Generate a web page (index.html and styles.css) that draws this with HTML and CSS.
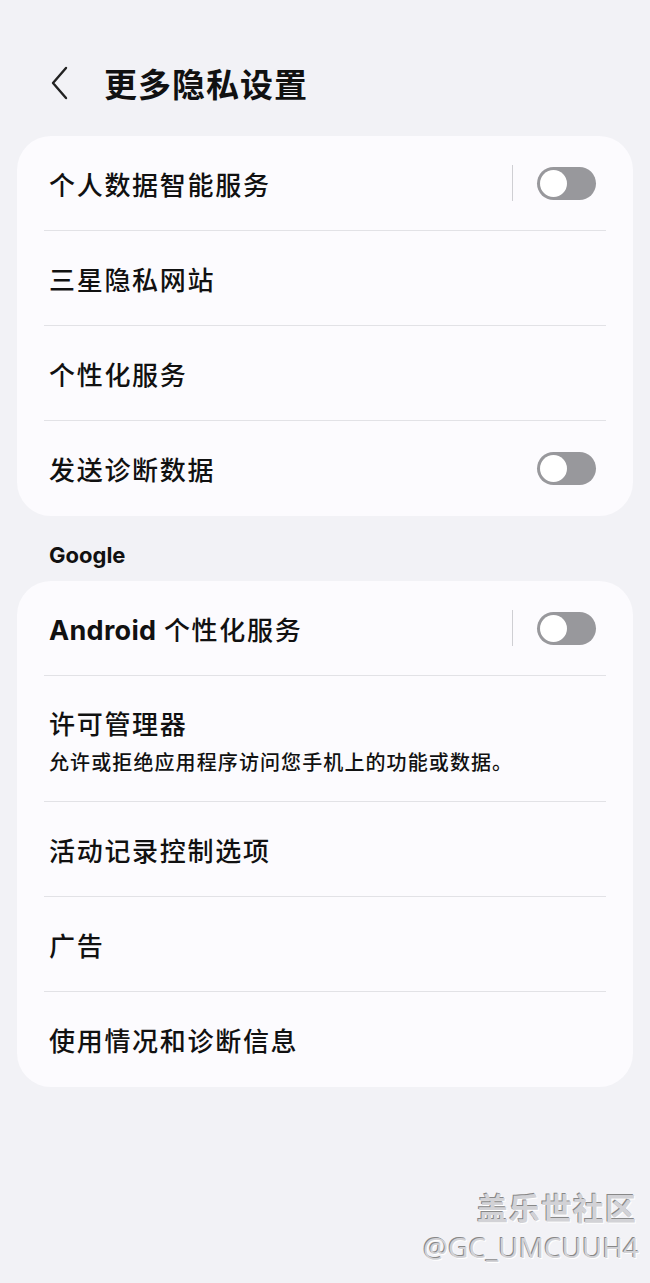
FILE: index.html
```html
<!DOCTYPE html>
<html lang="zh-CN">
<head>
    <meta charset="UTF-8">
    <title>更多隐私设置</title>
    <link rel="stylesheet" href="styles.css">
</head>
<body>
<div id="page">
    <div class="top-bar">
        <a class="back">
            <svg width="20" height="34" viewBox="0 0 20 34"><path d="M16 2 L3 17 L16 32" fill="none" stroke="#222" stroke-width="2.4" stroke-linecap="round" stroke-linejoin="round"/></svg>
        </a>
        <h1>更多隐私设置</h1>
    </div>

    <ul class="card">
        <li class="row">
            <span class="label">个人数据智能服务</span>
            <span class="split"></span>
            <span class="switch"><i></i></span>
        </li>
        <li class="row"><span class="label">三星隐私网站</span></li>
        <li class="row"><span class="label">个性化服务</span></li>
        <li class="row">
            <span class="label">发送诊断数据</span>
            <span class="switch"><i></i></span>
        </li>
    </ul>

    <h2 class="group-title">Google</h2>

    <ul class="card">
        <li class="row">
            <span class="label"><b class="latin">Android</b> 个性化服务</span>
            <span class="split"></span>
            <span class="switch"><i></i></span>
        </li>
        <li class="row row-tall">
            <div class="text">
                <span class="label">许可管理器</span>
                <p class="sub">允许或拒绝应用程序访问您手机上的功能或数据。</p>
            </div>
        </li>
        <li class="row"><span class="label">活动记录控制选项</span></li>
        <li class="row"><span class="label">广告</span></li>
        <li class="row"><span class="label">使用情况和诊断信息</span></li>
    </ul>

    <div class="mark">
        <span class="mark-cn">盖乐世社区</span>
        <span class="mark-id">@GC_UMCUUH4</span>
    </div>
</div>
</body>
</html>
```

FILE: styles.css
```css
*{margin: 0;padding: 0;box-sizing: border-box;}
li{list-style: none;}
body{background: #f2f2f6;font-family: "Noto Sans CJK SC", "Noto Sans", sans-serif;color: #111;}
#page{width: 650px;height: 1283px;padding: 0 17px;display: flex;flex-direction: column;}

.top-bar{height: 136px;display: flex;align-items: flex-start;padding: 60px 0 0 33px;}
.back{display: flex;width: 20px;margin: 6px 34px 0 0;}
.top-bar h1{font-size: 33px;line-height: 46px;font-weight: 700;letter-spacing: 1px;}

.card{background: #fcfbfe;border-radius: 34px;padding: 0 27px;}
.row{height: 95px;display: flex;align-items: center;border-bottom: 1.5px solid #e2e2e6;padding-left: 5px;}
.row:last-child{border-bottom: none;}
.row-tall{height: 126px;}
.label{font-size: 26px;font-weight: 500;letter-spacing: 1.7px;flex: 1;}
.latin{font-family: Inter, "Noto Sans", sans-serif;font-size: 27px;font-weight: 700;letter-spacing: 0.3px;}
.text{display: flex;flex-direction: column;gap: 6px;padding-top: 2px;}
.sub{font-size: 20px;font-weight: 500;letter-spacing: 1.1px;}

.split{width: 1.5px;height: 36px;background: #cfcfd3;margin-right: 24px;}
.switch{width: 59px;height: 33px;border-radius: 17px;background: #98989c;position: relative;margin-right: 10px;}
.switch i{position: absolute;left: 3px;top: 3px;width: 27px;height: 27px;border-radius: 50%;background: #fff;}

.group-title{font-family: Inter, "Noto Sans", sans-serif;font-size: 22px;font-weight: 700;height: 65px;display: flex;align-items: center;padding: 12px 0 0 32px;}

.mark{margin-top: auto;padding: 0 0 16px;display: flex;flex-direction: column;align-items: flex-end;color: #d2d2d6;text-shadow: -1px -1px 0 #888, 1px 1px 0 #fff;}
.mark-cn{font-size: 31px;font-weight: 700;letter-spacing: 1px;line-height: 40px;margin-right: -4px;}
.mark-id{font-family: "Open Sans", "Noto Sans", sans-serif;font-size: 28px;line-height: 40px;margin-right: -6px;}
```
